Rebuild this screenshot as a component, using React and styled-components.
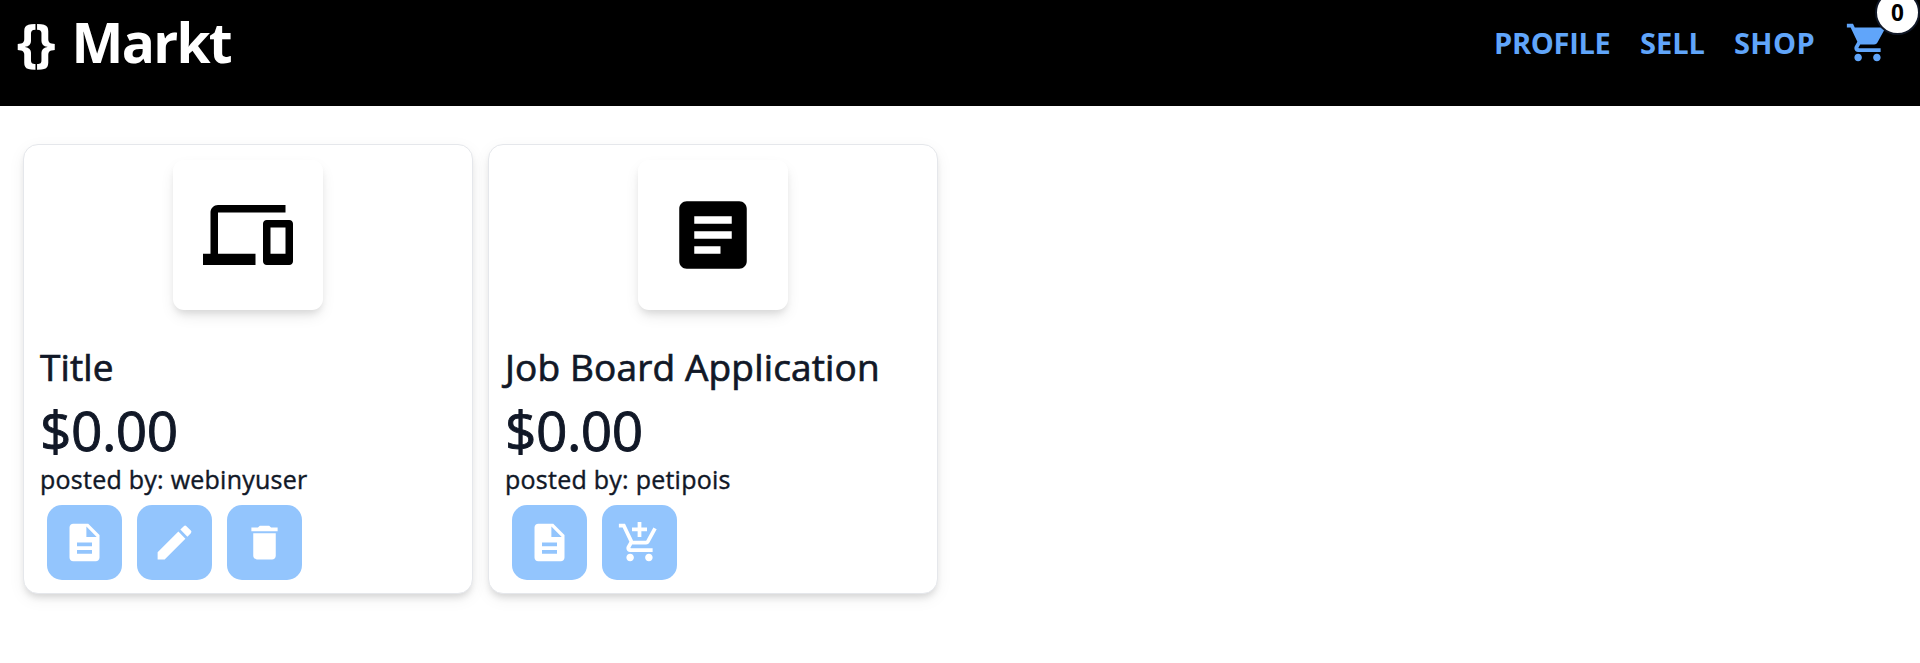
import React from "react";
import styled, { createGlobalStyle } from "styled-components";
import {
  MdAddShoppingCart,
  MdArticle,
  MdDelete,
  MdDescription,
  MdDevices,
  MdEdit,
  MdShoppingCart,
} from "react-icons/md";

const GlobalStyle = createGlobalStyle`
  *, *::before, *::after { box-sizing: border-box; }
  body {
    margin: 0;
    background: #fff;
    color: #111827;
    font-family: "Open Sans", "Noto Sans", sans-serif;
    overflow: hidden;
  }
`;

const Header = styled.header`
  display: flex;
  justify-content: space-between;
  align-items: flex-start;
  height: 106px;
  padding: 5px 30px 0 17px;
  background: #000;
`;

const Brand = styled.a`
  display: flex;
  color: #fff;
  font-size: 55px;
  font-weight: 700;
  line-height: 73px;
  white-space: pre;
`;

const BrandMark = styled.span`
  width: 54.5px;
  font-size: 52px;
  line-height: 72px;
  letter-spacing: -2.4px;
`;

const BrandName = styled.span`
  letter-spacing: -1.7px;
`;

const Nav = styled.nav`
  display: flex;
  align-items: center;
  height: 75px;
`;

const NavLink = styled.a`
  width: ${(p) => p.$width}px;
  color: #60a5fa;
  font-size: 29px;
  font-weight: 700;
  line-height: 38px;
  letter-spacing: ${(p) => p.$tracking || 0}px;
  white-space: nowrap;
`;

const Cart = styled.a`
  position: relative;
  display: flex;
  color: #60a5fa;
`;

const Badge = styled.span`
  position: absolute;
  top: -30px;
  right: -30px;
  display: flex;
  align-items: center;
  justify-content: center;
  width: 45px;
  height: 45px;
  border: 2.5px solid #111827;
  border-radius: 50%;
  background: #fff;
  color: #000;
  font-size: 22.5px;
  font-weight: 700;
  line-height: 30px;
`;

const Main = styled.main`
  display: flex;
  gap: 15px;
  padding: 38px 23px;
`;

const Card = styled.article`
  display: flex;
  flex-direction: column;
  width: 450px;
  height: 450px;
  padding: 15px 15px 0;
  border: 1px solid #e5e7eb;
  border-radius: 15px;
  background: #fff;
  box-shadow: 0 5px 18px -2px rgba(0, 0, 0, 0.08), 0 5px 7.5px -2.5px rgba(0, 0, 0, 0.12);
`;

const Thumb = styled.div`
  display: flex;
  flex-shrink: 0;
  align-items: center;
  justify-content: center;
  align-self: center;
  width: 150px;
  height: 150px;
  border-radius: 11px;
  color: #000;
  background: #fff;
  box-shadow: 0 7px 15px -2px rgba(0, 0, 0, 0.1), 0 5px 7.5px -2.5px rgba(0, 0, 0, 0.09);
`;

const Title = styled.h2`
  margin: 32px 0 0 1px;
  font-size: 37px;
  font-weight: 500;
  line-height: 50px;
  letter-spacing: 0.15px;
  white-space: nowrap;
  -webkit-text-stroke: 0.7px currentColor;
`;

const Price = styled.p`
  margin: 0 0 0 1px;
  font-size: 55px;
  font-weight: 500;
  line-height: 75px;
  letter-spacing: -0.5px;
  -webkit-text-stroke: 0.9px currentColor;
`;

const Seller = styled.p`
  margin: -6px 0 0 1px;
  font-size: 25px;
  font-weight: 500;
  line-height: 36px;
  letter-spacing: 0.25px;
  -webkit-text-stroke: 0.4px currentColor;
`;

const Actions = styled.div`
  display: flex;
  gap: 15px;
  margin: 8px 0 0 8px;
`;

const ActionButton = styled.button`
  display: flex;
  align-items: center;
  justify-content: center;
  width: 75px;
  height: 75px;
  padding: 0;
  border: 0;
  border-radius: 15px;
  background: #93c5fd;
  color: #fff;
`;

const products = [
  {
    title: "Title",
    price: "$0.00",
    seller: "webinyuser",
    Icon: MdDevices,
    actions: [MdDescription, MdEdit, MdDelete],
  },
  {
    title: "Job Board Application",
    price: "$0.00",
    seller: "petipois",
    Icon: MdArticle,
    actions: [MdDescription, MdAddShoppingCart],
  },
];

function ProductCard({ title, price, seller, Icon, actions }) {
  return (
    <Card>
      <Thumb>
        <Icon size={90} />
      </Thumb>
      <Title>{title}</Title>
      <Price>{price}</Price>
      <Seller>posted by: {seller}</Seller>
      <Actions>
        {actions.map((Action, i) => (
          <ActionButton key={i}>
            <Action size={45} />
          </ActionButton>
        ))}
      </Actions>
    </Card>
  );
}

export default function App() {
  return (
    <>
      <GlobalStyle />
      <Header>
        <Brand>
          <BrandMark>{"{}"}</BrandMark>
          <BrandName>Markt</BrandName>
        </Brand>
        <Nav>
          <NavLink $width={146} $tracking={-0.3}>PROFILE</NavLink>
          <NavLink $width={94}>SELL</NavLink>
          <NavLink $width={111} $tracking={0.4}>SHOP</NavLink>
          <Cart>
            <MdShoppingCart size={45} />
            <Badge>0</Badge>
          </Cart>
        </Nav>
      </Header>
      <Main>
        {products.map((p) => (
          <ProductCard key={p.title} {...p} />
        ))}
      </Main>
    </>
  );
}
